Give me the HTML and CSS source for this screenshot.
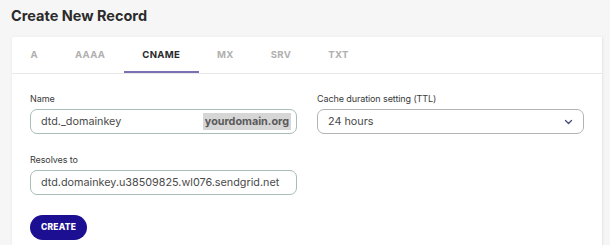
FILE: index.html
```html
<!DOCTYPE html>
<html lang="en">
  <head>
    <meta charset="UTF-8" />
    <title>Create New Record</title>
    <link rel="stylesheet" href="styles.css">
  </head>
  <body>
    <div class="page">
      <h1 class="title">Create New Record</h1>

      <div class="card">
        <ul class="tabs">
          <li>A</li>
          <li>AAAA</li>
          <li class="active">CNAME</li>
          <li>MX</li>
          <li>SRV</li>
          <li>TXT</li>
        </ul>

        <form class="form">
          <div class="field">
            <label>Name</label>
            <div class="input name">
              <span>dtd._domainkey</span>
              <span class="suffix">yourdomain.org</span>
            </div>
          </div>
          <div class="field">
            <label>Cache duration setting (TTL)</label>
            <div class="input select">
              <span>24 hours</span>
              <svg width="9" height="6" viewBox="0 0 9 6">
                <path d="M1.5 1.5 L4.5 4.5 L7.5 1.5" fill="none" stroke="#4a4a7a" stroke-width="1.3" stroke-linecap="round" stroke-linejoin="round" />
              </svg>
            </div>
          </div>
          <div class="field">
            <label>Resolves to</label>
            <div class="input">
              <span>dtd.domainkey.u38509825.wl076.sendgrid.net</span>
            </div>
          </div>
          <div></div>
          <div class="actions">
            <button type="button" class="create">CREATE</button>
          </div>
        </form>
      </div>
    </div>
  </body>
</html>
```

FILE: styles.css
```css
* {
  box-sizing: border-box;
  margin: 0px;
  padding: 0px;
}
body {
  background-color: #f6f6f6;
  font-family: Inter, "Noto Sans", sans-serif;
  color: #333;
  overflow: hidden;
}
.page {
  padding: 6px 7px 0 12px;
}
.title {
  font-size: 14.5px;
  font-weight: 700;
  color: #2b2b2b;
  line-height: 20px;
  margin-left: -1px;
}
.card {
  margin-top: 11px;
  background-color: #fff;
  height: 220px;
  box-shadow: 0 0 3px rgba(0, 0, 0, 0.06);
  border-right: 1px solid #e9e9e9;
}
.tabs {
  list-style: none;
  display: flex;
  height: 37px;
  border-bottom: 1px solid #e8e8e8;
}
.tabs li {
  padding: 0 18.5px;
  font-size: 9.6px;
  font-weight: 700;
  color: #b0b0b0;
  line-height: 36px;
  letter-spacing: 0.3px;
}
.tabs .active {
  color: #2a2a2a;
  border-bottom: 2px solid #7a70b2;
}
.form {
  display: grid;
  grid-template-columns: 267px 267px;
  column-gap: 20px;
  row-gap: 19px;
  padding: 18px 19px 0 18px;
}
.field label {
  display: block;
  font-size: 9px;
  color: #3a3a3a;
  line-height: 14px;
  margin-bottom: 3px;
  letter-spacing: -0.1px;
}
.input {
  height: 25px;
  border: 1px solid #a9bdb6;
  border-radius: 7px;
  display: flex;
  align-items: center;
  justify-content: space-between;
  padding: 0 5px 0 10px;
  font-size: 10.8px;
  color: #4a4a4a;
}
.suffix {
  background-color: #d6d6d6;
  color: #5a5a5a;
  font-weight: 700;
  padding: 1px 2px;
  line-height: 15px;
}
.select {
  border-color: #b3b3b3;
  padding-right: 10px;
}
.create {
  width: 57px;
  height: 25px;
  border: none;
  border-radius: 13px;
  background-color: #1d0f91;
  color: #fff;
  font-family: Inter, "Noto Sans", sans-serif;
  font-size: 8.5px;
  font-weight: 800;
  letter-spacing: 0.2px;
}
```
